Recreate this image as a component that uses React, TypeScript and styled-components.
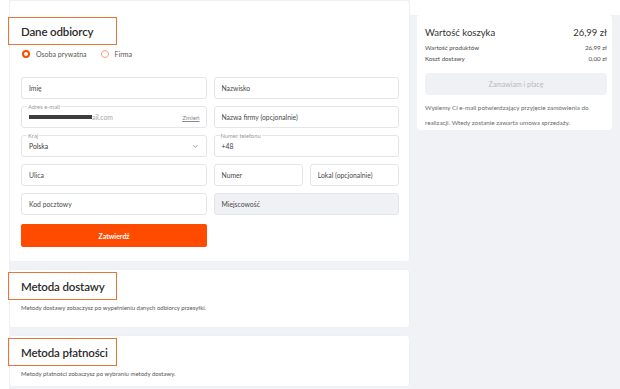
import React from "react";
import styled, { createGlobalStyle } from "styled-components";
import { ChevronDown } from "lucide-react";

const GlobalStyle = createGlobalStyle`
  html, body {
    margin: 0;
    background: #ffffff;
    font-family: Lato, "Noto Sans", sans-serif;
    color: #3a3a3a;
  }
  * { box-sizing: border-box; }
`;

const ORANGE = "#ff4b00";
const GREY_BG = "#f1f2f5";

export default function App(): JSX.Element {
  return (
    <>
      <GlobalStyle />
      <Page>
        <Main>
          <Card $pt={17} $pb={15}>
            <SectionTitle>Dane odbiorcy</SectionTitle>
            <RadioRow>
              <RadioOption>
                <Radio $checked />
                Osoba prywatna
              </RadioOption>
              <RadioOption>
                <Radio />
                Firma
              </RadioOption>
            </RadioRow>
            <FormGrid>
              <Field>Imię</Field>
              <Field>Nazwisko</Field>
              <Field>
                <FloatLabel>Adres e-mail</FloatLabel>
                <Masked />
                <Muted>ail.com</Muted>
                <ChangeLink>Zmień</ChangeLink>
              </Field>
              <Field>Nazwa firmy (opcjonalnie)</Field>
              <Field>
                <FloatLabel>Kraj</FloatLabel>
                <Value>Polska</Value>
                <Chevron>
                  <ChevronDown size={7} strokeWidth={2} />
                </Chevron>
              </Field>
              <Field>
                <FloatLabel>Numer telefonu</FloatLabel>
                <Value>+48</Value>
              </Field>
              <Field>Ulica</Field>
              <SplitRow>
                <Field>Numer</Field>
                <Field>Lokal (opcjonalnie)</Field>
              </SplitRow>
              <Field>Kod pocztowy</Field>
              <Field $disabled>Miejscowość</Field>
            </FormGrid>
            <SubmitButton>Zatwierdź</SubmitButton>
          </Card>

          <Card $pt={3} $pb={16}>
            <SectionTitle>Metoda dostawy</SectionTitle>
            <Note>Metody dostawy zobaczysz po wypełnieniu danych odbiorcy przesyłki.</Note>
          </Card>

          <Card $pt={3} $pb={9}>
            <SectionTitle>Metoda płatności</SectionTitle>
            <Note>Metody płatności zobaczysz po wybraniu metody dostawy.</Note>
          </Card>
        </Main>

        <Aside>
          <Summary>
            <SummaryHead>
              <span>Wartość koszyka</span>
              <span>26,99 zł</span>
            </SummaryHead>
            <SummaryList>
              <SummaryRow>
                <span>Wartość produktów</span>
                <span>26,99 zł</span>
              </SummaryRow>
              <SummaryRow>
                <span>Koszt dostawy</span>
                <span>0,00 zł</span>
              </SummaryRow>
            </SummaryList>
            <OrderButton>Zamawiam i płacę</OrderButton>
            <Info>
              Wyślemy Ci e-mail potwierdzający przyjęcie zamówienia do realizacji. Wtedy zostanie
              zawarta umowa sprzedaży.
            </Info>
          </Summary>
        </Aside>
      </Page>
    </>
  );
}

const Page = styled.div`
  width: 620px;
  height: 389px;
  display: flex;
  padding-left: 9px;
  overflow: hidden;
`;

const Main = styled.main`
  width: 401px;
  flex-shrink: 0;
  display: flex;
  flex-direction: column;
  gap: 7px;
  background: ${GREY_BG};
`;

const Card = styled.section<{ $pt: number; $pb: number }>`
  background: #fff;
  box-shadow: inset 0 0 0 1px #eff0f3;
  border-radius: 4px;
  padding: ${(p) => p.$pt}px 11px ${(p) => p.$pb}px 12px;
`;

const SectionTitle = styled.h2`
  margin: 0 0 0 -13px;
  width: 109px;
  height: 28px;
  display: flex;
  align-items: center;
  padding-left: 12px;
  border: 1.5px solid #e8763a;
  font-size: 11.5px;
  font-weight: 600;
  letter-spacing: -0.15px;
  color: #2b2b2b;
  white-space: nowrap;
`;

const RadioRow = styled.div`
  display: flex;
  gap: 14px;
  margin-top: 4px;
  height: 10px;
  align-items: center;
  padding-left: 1px;
`;

const RadioOption = styled.label`
  display: flex;
  align-items: center;
  gap: 6px;
  font-size: 7px;
  color: #555;
`;

const Radio = styled.span<{ $checked?: boolean }>`
  width: 8px;
  height: 8px;
  border-radius: 50%;
  border: ${(p) => (p.$checked ? `2.5px solid ${ORANGE}` : "1px solid #f5a27a")};
  background: #fff;
`;

const FormGrid = styled.div`
  margin-top: 18px;
  display: grid;
  grid-template-columns: 1fr 1fr;
  grid-auto-rows: 22px;
  gap: 7px;
`;

const SplitRow = styled.div`
  display: grid;
  grid-template-columns: 1fr 1fr;
  gap: 7px;
`;

const Field = styled.div<{ $disabled?: boolean }>`
  position: relative;
  display: flex;
  align-items: center;
  padding: 0 6px 0 7px;
  border: 1px solid #e4e5e9;
  border-radius: 3px;
  background: ${(p) => (p.$disabled ? "#f0f1f4" : "#fff")};
  font-size: 6.8px;
  color: #4a4a4a;
`;

const FloatLabel = styled.span`
  position: absolute;
  top: -4px;
  left: 5px;
  padding: 0 1px;
  background: #fff;
  font-size: 5.8px;
  line-height: 7px;
  color: #9a9a9a;
`;

const Value = styled.span`
  flex: 1;
  color: #3a3a3a;
`;

const Masked = styled.span`
  width: 63px;
  height: 4px;
  background: #3d3d3d;
`;

const Muted = styled.span`
  flex: 1;
  color: #a8a8a8;
`;

const ChangeLink = styled.span`
  font-size: 6.3px;
  color: #8a8a8a;
  text-decoration: underline;
`;

const Chevron = styled.span`
  display: flex;
  color: #555;
  margin-right: 1px;
`;

const SubmitButton = styled.button`
  margin-top: 9px;
  width: 186px;
  height: 23px;
  border: none;
  border-radius: 2px;
  background: ${ORANGE};
  color: #fff;
  font-family: inherit;
  font-size: 7px;
  font-weight: 700;
`;

const Note = styled.p`
  margin: 4px 0 0;
  font-size: 6px;
  line-height: 8px;
  color: #555;
`;

const Aside = styled.aside`
  flex: 1;
  margin-top: 15px;
  padding: 0 8px 0 7px;
  background: ${GREY_BG};
`;

const Summary = styled.div`
  background: #fff;
  border-radius: 4px;
  padding: 10px 5px 0 8px;
`;

const SummaryHead = styled.div`
  display: flex;
  justify-content: space-between;
  height: 14px;
  align-items: center;
  font-size: 9.5px;
  color: #333;
`;

const SummaryList = styled.div`
  margin-top: 3px;
`;

const SummaryRow = styled.div`
  display: flex;
  justify-content: space-between;
  height: 11px;
  align-items: center;
  font-size: 6.2px;
  color: #4a4a4a;
`;

const OrderButton = styled.button`
  display: block;
  margin-top: 9px;
  width: 100%;
  height: 22px;
  border: none;
  border-radius: 3px;
  background: #f0f1f4;
  color: #b8b9bd;
  font-family: inherit;
  font-size: 7px;
`;

const Info = styled.p`
  margin: 5px 0 0;
  font-size: 6.3px;
  line-height: 15px;
  color: #6a6a6a;
  max-width: 165px;
`;
